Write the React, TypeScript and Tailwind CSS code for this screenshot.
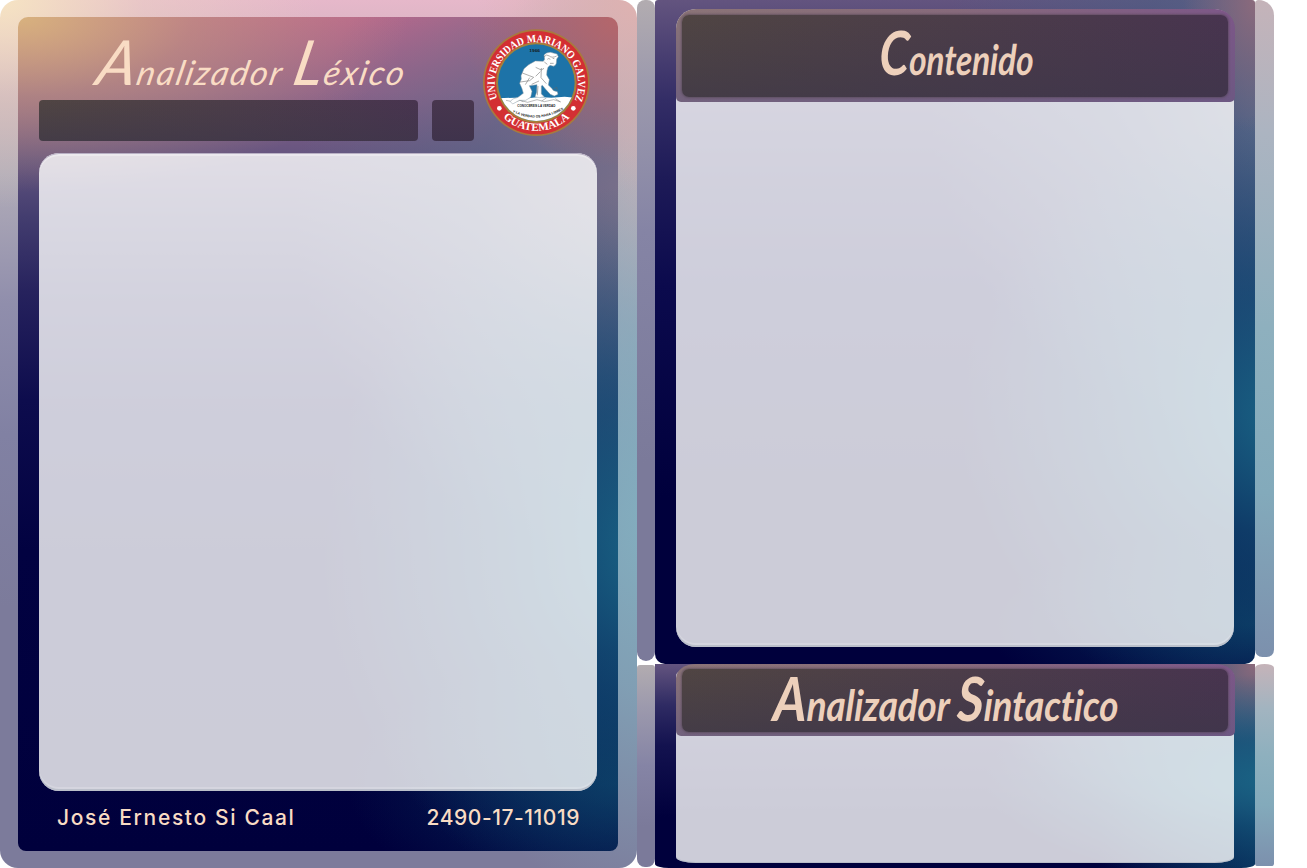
import React from "react";

function Seal() {
  return (
    <svg viewBox="0 0 348 360" className="ml-1 h-[120px] w-[116px] shrink-0" aria-label="Universidad Mariano Galvez">
      <defs>
        <path id="sealTop" d="M58 230A125 125 0 1 1 292 230" />
        <path id="sealBottom" d="M50 256A146 146 0 0 0 300 256" />
        <path id="motto" d="M100 268Q175 308 256 262" />
        <clipPath id="sealDisc">
          <circle cx="175" cy="182" r="115" />
        </clipPath>
      </defs>
      <circle cx="175" cy="182" r="160" fill="#a97a3d" />
      <circle cx="175" cy="182" r="155" fill="#d32f33" />
      <circle cx="175" cy="182" r="121" fill="#a5803a" />
      <circle cx="175" cy="182" r="115" fill="#1d73a8" />
      <g clipPath="url(#sealDisc)">
        <path d="M55 229L112 227 150 229 182 225 220 227 260 224 300 228V300H55Z" fill="#fff" />
        <path d="M84 235l24 5 18-5 23 6 28-8 22 6 28-6 22 7M118 231l18 8M205 228l-14 9M232 230l14 9" fill="none" stroke="#777" strokeWidth="1.5" />
        <path
          d="M198 99Q205 90 218 91L237 96 241 104 236 111 235 124Q232 135 224 132L216 130 210 136 207 146 206 159 214 173 211 189 221 199 227 206 238 209 240 217 229 222 217 217 203 202 193 190 190 192 190 216 199 224 185 227 171 224 176 211 177 188 154 191 162 208 158 226 143 235 124 235 104 246 97 239 104 231 120 226 136 214 132 200 125 184 130 171 129 161 138 140 152 128 172 117 196 118 200 112Z"
          fill="#fff"
          stroke="#8b9aa5"
          strokeWidth="1.5"
          strokeLinejoin="round"
        />
        <path d="M198 104q8-9 16-2t22 0M208 112q4-5 9 0m7-3l5 1M216 124l11 0M199 120l9 7M133 153l21 8 13 5-12 10-28 4M173 136l17 8 8-5M190 138l-1 29 16 18M187 149l-14 14M155 167l-13 21M183 177l-22 10M180 192l-2 28M224 203l12-7 2 8" fill="none" stroke="#666" strokeWidth="1.6" />
      </g>
      <g fontFamily="Liberation Serif, serif" fontWeight="700" fill="#fff" fontSize="33">
        <text>
          <textPath href="#sealTop" textLength="488" lengthAdjust="spacingAndGlyphs">UNIVERSIDAD MARIANO GALVEZ</textPath>
        </text>
        <text>
          <textPath href="#sealBottom" startOffset="50%" textAnchor="middle" textLength="220" lengthAdjust="spacingAndGlyphs">GUATEMALA</textPath>
        </text>
      </g>
      <circle cx="64" cy="259" r="7" fill="#fff" />
      <circle cx="286" cy="259" r="7" fill="#fff" />
      <g fontFamily="Liberation Sans, sans-serif" fontWeight="700" fill="#15181b">
        <text x="154" y="91" fontSize="12" textLength="32" lengthAdjust="spacingAndGlyphs">1966</text>
        <text x="118" y="254" fontSize="9" textLength="114" lengthAdjust="spacingAndGlyphs">CONOCEREIS LA VERDAD</text>
        <text fontSize="10">
          <textPath href="#motto" startOffset="4" textLength="160" lengthAdjust="spacingAndGlyphs">Y LA VERDAD OS HARA LIBRES</textPath>
        </text>
      </g>
    </svg>
  );
}

const darkBox =
  "bg-[linear-gradient(to_bottom,transparent,#3c364999),linear-gradient(to_right,#504543,#4c3d49_50%,#48344f)]";

function LexerCard() {
  return (
    <section className="relative h-[868px] w-[637px] shrink-0 overflow-hidden rounded-[18px] bg-[radial-gradient(ellipse_50%_24%_at_0_0,#f6e4c3,#ecd6c477_45%,transparent),radial-gradient(ellipse_25%_22%_at_100%_0,#deb2b0,transparent),radial-gradient(ellipse_45%_45%_at_105%_60%,#83b0c0,#83b0c0aa_45%,transparent),radial-gradient(ellipse_30%_36%_at_105%_22%,#cfb3b8cc,#a8aab899_50%,transparent),linear-gradient(to_bottom,#e6b8ca,#c2adb8_12%,#b1acb8_20%,#908eac_35%,#8181a3_50%,#7c7b9b_70%)] pt-[17px] pr-[19px] pl-[18px]">
      <div className="flex h-[834px] w-[600px] flex-col rounded-t-[10px] rounded-b-[8px] bg-[radial-gradient(ellipse_65%_21%_at_0_0,#d8b27e,#c4988099_45%,transparent),radial-gradient(ellipse_26%_18%_at_100%_0,#b5666a,transparent),radial-gradient(ellipse_55%_44%_at_106%_64%,#1a6586,#16587daa_40%,transparent),radial-gradient(ellipse_60%_42%_at_106%_23%,#80748c,#5c6c8a88_50%,transparent),radial-gradient(ellipse_45%_16%_at_100%_92%,#062c58,transparent),linear-gradient(to_bottom,#b9688c,#8f6289_9%,#63547f_17%,#433d6f_24%,#26225d_33%,#0d0c4d_46%,#020241_64%,#00003c)] px-[21px]">
        <header className="flex h-[136px] pt-[5px]">
          <div className="flex w-[435px] shrink-0 flex-col">
            <h1 className="h-[78px] whitespace-nowrap pl-[59px] font-['Lato'] text-[34px] leading-[78px] tracking-[1.85px] text-[#f9dcc4] italic">
              <span className="inline-block origin-left -skew-x-12">
                <span className="text-[62px]">A</span>nalizador <span className="text-[62px]">L</span>éxico
              </span>
            </h1>
            <div className="flex gap-[14px]">
              <div className={`h-[41px] w-[379px] rounded ${darkBox}`} />
              <div className="h-[41px] w-[42px] rounded bg-gradient-to-b from-[#48364e] to-[#3f334c]" />
            </div>
          </div>
          <Seal />
        </header>
        <div className="h-[638px] w-[558px] rounded-[20px] bg-white/80 shadow-[inset_0_1px_0_#b8b0c4,inset_0_-2px_0_#aeb4c0aa,inset_0_3px_0_#ffffff50,inset_0_-4px_0_#ffffff30]" />
        <footer className="flex justify-between pt-[12px] pr-[17px] pl-[18px] font-['Inter'] text-[21px] leading-[30px] font-medium text-[#f9dcc4]">
          <span className="tracking-[1.65px]">José Ernesto Si Caal</span>
          <span className="tracking-[0.55px]">2490-17-11019</span>
        </footer>
      </div>
    </section>
  );
}

function ContentCard() {
  return (
    <section className="flex h-[664px]">
      <div className="h-[661px] w-[18px] rounded-t-[8px] rounded-b-[9px] bg-[linear-gradient(to_bottom,#b2acb0,#9d9aad_12%,#8584a5_35%,#7b7a9a_70%)]" />
      <div className="w-[600px] rounded-t-[3px] rounded-b-[10px] bg-[radial-gradient(ellipse_55%_46%_at_106%_63%,#1a6586,#16587daa_40%,transparent),radial-gradient(ellipse_12%_20%_at_100%_0,#8b6a7c,transparent),radial-gradient(ellipse_60%_50%_at_106%_17%,#5c6c8a,#4a608588_50%,transparent),radial-gradient(ellipse_45%_14%_at_100%_94%,#062c58,transparent),linear-gradient(to_bottom,#63547f,#332d66_15%,#1d1a57_27%,#0b0a4d_43%,#00003c_75%)] px-[21px] pt-[9px]">
        <div className="h-[638px] w-[558px] rounded-[20px] bg-white/80 shadow-[inset_0_-2px_0_#aeb4c0aa,inset_0_-4px_0_#ffffff30]">
          <div className="h-[93px] w-[559px] rounded-t-[20px] rounded-b-[5px] bg-[linear-gradient(to_bottom,transparent,#655880aa),linear-gradient(to_right,#8b7477,#876a7b_50%,#7d5788)] px-[6px] pt-[6px]">
            <div className={`flex h-[82px] w-[546px] justify-center rounded-[7px] shadow-[0_0_2px_1px_#51445499] ${darkBox}`}>
              <h2 className="origin-center translate-x-[2px] scale-x-[0.79] -skew-x-3 whitespace-nowrap font-['Lato'] text-[42px] leading-[74px] font-bold text-[#edd0bb] italic">
                <span className="text-[61px]">C</span>ontenido
              </h2>
            </div>
          </div>
        </div>
      </div>
      <div className="h-[657px] w-[19px] rounded-tl-[4px] rounded-tr-[17px] rounded-b-[8px] bg-[linear-gradient(to_bottom,#c5b3b9,#acb4c1_20%,#8eb0be_50%,#83aabb_75%,#7c90ad)]" />
    </section>
  );
}

function ParserCard() {
  return (
    <section className="flex h-[204px]">
      <div className="mt-px h-[202px] w-[18px] rounded-t-[3px] rounded-b-[8px] bg-[linear-gradient(to_bottom,#b2acb0,#9d9aad_20%,#8584a5_50%,#7b7a9a_80%)]" />
      <div className="w-[600px] rounded-b-[14px_4px] bg-[radial-gradient(ellipse_50%_52%_at_105%_57%,#1a6586,#16587dbb_40%,transparent),radial-gradient(ellipse_12%_40%_at_100%_0,#8b6a7c,transparent),radial-gradient(ellipse_50%_60%_at_105%_20%,#446284,#3a5a8099_50%,transparent),linear-gradient(100deg,transparent_75%,#062c58),linear-gradient(to_bottom,#63547f,#2f2b63_20%,#13124f_40%,#00003c_75%)] px-[21px] pt-[5px]">
        <div className="flex h-[194px] w-[558px] flex-col rounded-t-[14px_7px] rounded-b-[20px_6px] bg-white/80 shadow-[inset_0_-1px_0_#aeb4c0aa]">
          <div className="-mt-[5px] h-[72px] w-[559px] rounded-t-[20px_14px] rounded-b-[5px] bg-[linear-gradient(to_bottom,transparent,#655880aa),linear-gradient(to_right,#8b7477,#876a7b_50%,#7d5788)] px-[6px] pt-[5px]">
            <div className={`flex h-[63px] w-[546px] justify-center rounded-[7px] shadow-[0_0_2px_1px_#51445499] ${darkBox}`}>
              <h2 className="origin-center -translate-x-[9px] scale-x-[0.85] -skew-x-3 whitespace-nowrap font-['Lato'] text-[43px] leading-[58px] font-bold text-[#edd0bb] italic [font-variant-ligatures:none]">
                <span className="text-[61px]">A</span>nalizador <span className="text-[61px]">S</span>intactico
              </h2>
            </div>
          </div>
        </div>
      </div>
      <div className="h-[202px] w-[19px] rounded-t-[10px_4px] rounded-b-[3px] bg-[linear-gradient(to_bottom,#c5b3b9,#a2b4c0_22%,#8eb0be_45%,#83aabb_70%,#7c90ad)]" />
    </section>
  );
}

export default function App() {
  return (
    <main className="flex h-[868px] w-[1307px] overflow-hidden bg-white">
      <LexerCard />
      <div className="flex w-[637px] shrink-0 flex-col">
        <ContentCard />
        <ParserCard />
      </div>
    </main>
  );
}
